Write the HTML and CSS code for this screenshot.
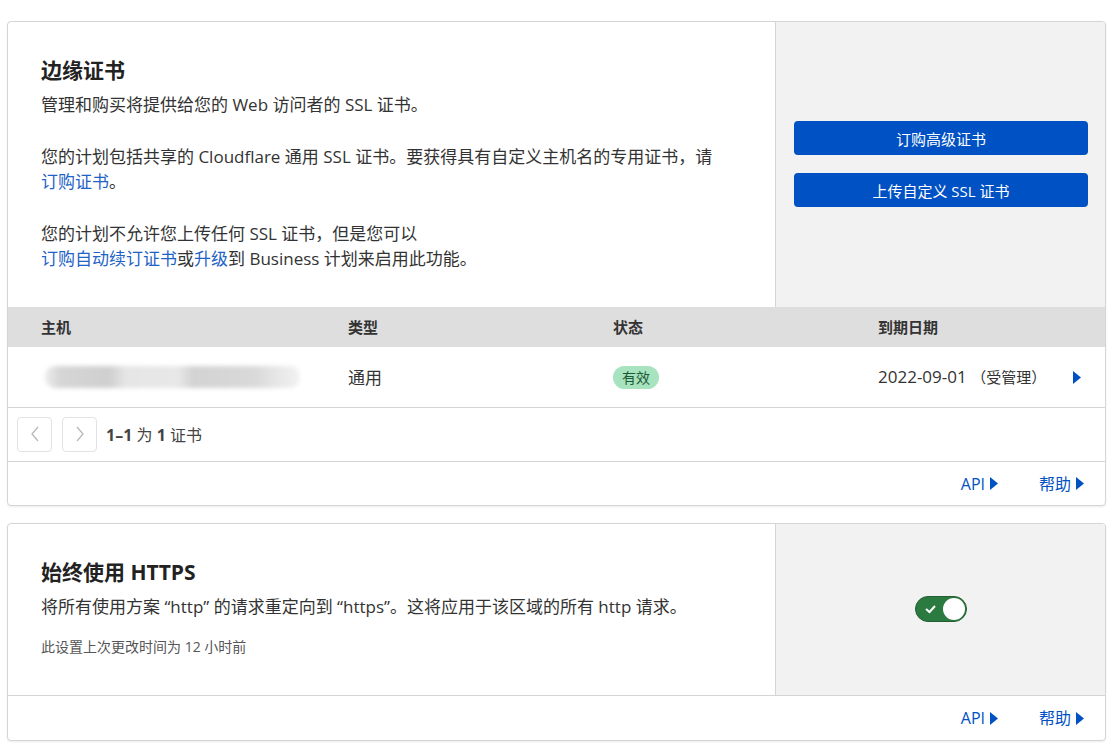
FILE: index.html
```html
<!DOCTYPE html>
<html lang="zh-CN">

<head>
    <meta charset="UTF-8">
    <meta name="viewport" content="width=device-width, initial-scale=1.0">
    <title>SSL/TLS 边缘证书</title>
    <link rel="stylesheet" href="styles.css">
</head>

<body>
    <div class="page">
        <!-- 边缘证书 -->
        <div class="card">
            <div class="card-top">
                <div class="card-body">
                    <h2 class="card-title">边缘证书</h2>
                    <p>管理和购买将提供给您的 Web 访问者的 SSL 证书。</p>
                    <p>您的计划包括共享的 Cloudflare 通用 SSL 证书。要获得具有自定义主机名的专用证书，请<br><a href="#">订购证书</a>。</p>
                    <p>您的计划不允许您上传任何 SSL 证书，但是您可以<br><a href="#">订购自动续订证书</a>或<a href="#">升级</a>到 Business 计划来启用此功能。</p>
                </div>
                <div class="card-side side-buttons">
                    <button class="btn">订购高级证书</button>
                    <button class="btn">上传自定义 SSL 证书</button>
                </div>
            </div>

            <div class="cert-table">
                <div class="cert-row cert-head">
                    <div>主机</div>
                    <div>类型</div>
                    <div>状态</div>
                    <div>到期日期</div>
                </div>
                <div class="cert-row">
                    <div><span class="host-mask"></span></div>
                    <div>通用</div>
                    <div><span class="badge">有效</span></div>
                    <div class="expire">
                        <span>2022-09-01 <small>（受管理）</small></span>
                        <svg class="caret" width="8" height="13" viewBox="0 0 8 13"><polygon points="0,0 8,6.5 0,13"/></svg>
                    </div>
                </div>
            </div>

            <div class="pager">
                <button class="pager-btn"><svg width="10" height="16" viewBox="0 0 10 16"><polyline points="8,1 2,8 8,15"/></svg></button>
                <button class="pager-btn"><svg width="10" height="16" viewBox="0 0 10 16"><polyline points="2,1 8,8 2,15"/></svg></button>
                <span class="pager-text"><b>1–1</b> 为 <b>1</b> 证书</span>
            </div>

            <div class="card-foot">
                <a href="#">API <svg width="8" height="13" viewBox="0 0 8 13"><polygon points="0,0 8,6.5 0,13"/></svg></a>
                <a href="#">帮助 <svg width="8" height="13" viewBox="0 0 8 13"><polygon points="0,0 8,6.5 0,13"/></svg></a>
            </div>
        </div>

        <!-- 始终使用 HTTPS -->
        <div class="card">
            <div class="card-top">
                <div class="card-body">
                    <h2 class="card-title">始终使用 HTTPS</h2>
                    <p>将所有使用方案 “http” 的请求重定向到 “https”。这将应用于该区域的所有 http 请求。</p>
                    <p class="note">此设置上次更改时间为 12 小时前</p>
                </div>
                <div class="card-side side-center">
                    <label class="toggle">
                        <svg class="check" width="14" height="14" viewBox="0 0 14 14"><polyline points="2,7 5.5,10 11,4"/></svg>
                        <span class="knob"></span>
                    </label>
                </div>
            </div>
            <div class="card-foot last">
                <a href="#">API <svg width="8" height="13" viewBox="0 0 8 13"><polygon points="0,0 8,6.5 0,13"/></svg></a>
                <a href="#">帮助 <svg width="8" height="13" viewBox="0 0 8 13"><polygon points="0,0 8,6.5 0,13"/></svg></a>
            </div>
        </div>
    </div>
</body>

</html>
```

FILE: styles.css
```css
html * {
    margin: 0;
    padding: 0;
    box-sizing: border-box;
}

body {
    background: #fff;
    font-family: "Open Sans", "Noto Sans CJK SC", sans-serif;
    color: #333;
}

a {
    color: #1f63c6;
    text-decoration: none;
}

.page {
    padding: 21px 13px 6px 7px;
}

/* 卡片 */
.card {
    background: #fff;
    border: 1px solid #d5d5d5;
    border-radius: 4px;
    box-shadow: 0 1px 2px rgba(0, 0, 0, 0.08);
    overflow: hidden;
    margin-bottom: 17px;
}

.card-top {
    display: grid;
    grid-template-columns: 1fr 330px;
}

.card-body {
    padding: 32px 34px 35px 33px;
    font-size: 17px;
    line-height: 25.5px;
}

.card-body p + p {
    margin-top: 26px;
}

.card-title {
    font-size: 21px;
    line-height: 32px;
    font-weight: 700;
    color: #222;
    margin-bottom: 6px;
}

.card-body .note {
    margin-top: 17px;
    font-size: 14px;
    line-height: 21px;
    color: #555;
    margin-bottom: 3px;
}

.card-side {
    background: #f2f2f2;
    border-left: 1px solid #d5d5d5;
}

.side-buttons {
    display: flex;
    flex-direction: column;
    justify-content: center;
    gap: 18px;
    padding: 0 17px 0 18px;
}

.side-center {
    display: flex;
    align-items: center;
    justify-content: center;
}

.btn {
    height: 34px;
    border: none;
    border-radius: 4px;
    background: #0051c3;
    color: #fff;
    font-family: inherit;
    font-size: 15px;
}

/* 证书表格 */
.cert-row {
    display: grid;
    grid-template-columns: 307px 265px 265px 1fr;
    align-items: center;
    padding-left: 33px;
}

.cert-head {
    height: 40px;
    background: #dedede;
    font-size: 15px;
    font-weight: 600;
    color: #333;
}

.cert-row:not(.cert-head) {
    height: 61px;
    font-size: 17px;
    border-bottom: 1px solid #d5d5d5;
}

.host-mask {
    display: block;
    width: 255px;
    height: 22px;
    margin-left: 4px;
    border-radius: 10px;
    background: linear-gradient(90deg, #ececec 0, #d6d6d6 6%, #cfcfcf 25%, #e6e6e6 32%, #e8e8e8 52%, #d3d3d3 58%, #d9d9d9 82%, #e8e8e8 92%, #f2f2f2 100%);
    filter: blur(2px);
}

.badge {
    display: inline-block;
    padding: 0 9px;
    height: 23px;
    line-height: 23px;
    border-radius: 12px;
    background: #a7e3bf;
    color: #1d5a33;
    font-size: 14px;
}

.expire {
    display: flex;
    align-items: center;
    justify-content: space-between;
    padding-right: 24px;
}

.expire small {
    font-size: 15px;
}

.caret {
    fill: #0051c3;
    margin-top: 1px;
}

/* 分页 */
.pager {
    display: flex;
    align-items: center;
    gap: 10px;
    padding: 9px;
    border-bottom: 1px solid #d5d5d5;
}

.pager-btn {
    width: 35px;
    height: 35px;
    border: 1px solid #e2e2e2;
    border-radius: 4px;
    background: #fff;
    display: flex;
    align-items: center;
    justify-content: center;
}

.pager-btn polyline {
    fill: none;
    stroke: #b8b8b8;
    stroke-width: 1.3;
}

.pager-text {
    margin-left: -1px;
    font-size: 16px;
    color: #444;
}

/* 底部链接 */
.card-foot {
    display: flex;
    justify-content: flex-end;
    gap: 41px;
    padding: 11px 21px 10px 0;
    font-size: 16px;
    line-height: 22px;
}

.card-foot.last {
    border-top: 1px solid #d5d5d5;
    padding: 11px 21px 11px 0;
}

.card-foot a {
    display: flex;
    align-items: center;
    gap: 5px;
    color: #0051c3;
}

.card-foot svg {
    fill: #0051c3;
}

/* 开关 */
.toggle {
    position: relative;
    width: 52px;
    height: 26px;
    border-radius: 13px;
    background: #2b7a3f;
    border: 1px solid #245f33;
}

.toggle .check {
    position: absolute;
    left: 8px;
    top: 5px;
}

.toggle .check polyline {
    fill: none;
    stroke: #fff;
    stroke-width: 2;
}

.knob {
    position: absolute;
    right: 1px;
    top: 1px;
    width: 22px;
    height: 22px;
    border-radius: 50%;
    background: #fff;
}
```
